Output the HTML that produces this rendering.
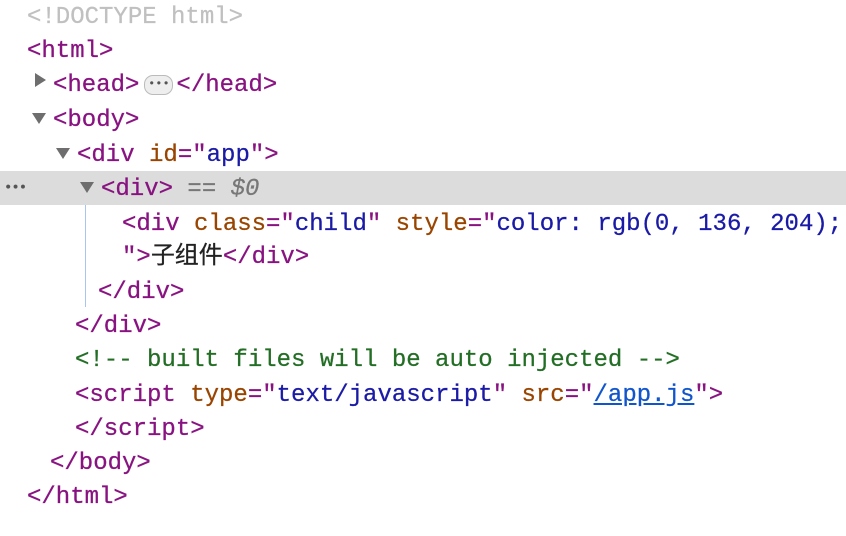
<!DOCTYPE html>
<html><head><style>
body{margin:0;width:846px;height:534px;background:#fff;overflow:hidden;position:relative;font-family:"Liberation Mono","Noto Sans CJK SC",monospace;font-size:24px;}
#w{position:absolute;left:0;top:2px;width:846px;height:534px;}
.l{position:absolute;height:34px;line-height:34px;white-space:pre;-webkit-text-stroke:0.25px currentColor;}
.t{color:#881280}.a{color:#994500}.v{color:#1a1aa6}.c{color:#236e25}.d{color:#c0c0c0}.g{color:#222}
.tri{position:absolute;width:0;height:0;}
.r{border-top:7px solid transparent;border-bottom:7px solid transparent;border-left:11px solid #6e6e6e;}
.dn{border-left:7px solid transparent;border-right:7px solid transparent;border-top:11px solid #6e6e6e;}
</style></head><body>
<div style="position:absolute;left:0;top:171px;width:846px;height:34px;background:#dcdcdc"></div>
<div style="position:absolute;left:85px;top:205px;width:1px;height:102px;background:#a8c4f0"></div>
<div id="w">
<div class="l d" style="left:27px;top:-1px">&lt;!DOCTYPE html&gt;</div>
<div class="l t" style="left:27px;top:33px">&lt;html&gt;</div>
<div class="tri r" style="left:35px;top:71px"></div>
<div class="l t" style="left:53px;top:67px">&lt;head&gt;<span style="display:inline-block;width:27px;height:18px;border-radius:9px;background:#eee;border:1px solid #bbb;vertical-align:middle;margin:0 3px 0 5px;font-size:12px;line-height:16px;text-align:center;color:#555;-webkit-text-stroke:0">•••</span>&lt;/head&gt;</div>
<div class="tri dn" style="left:32px;top:111px"></div>
<div class="l t" style="left:53px;top:102px">&lt;body&gt;</div>
<div class="tri dn" style="left:56px;top:146px"></div>
<div class="l" style="left:77px;top:137px"><span class="t">&lt;div </span><span class="a">id</span><span class="t">="</span><span class="v">app</span><span class="t">"&gt;</span></div>
<div class="l" style="left:4px;top:169px;font-size:14px;color:#555;letter-spacing:-1px">•••</div>
<div class="tri dn" style="left:80px;top:180px"></div>
<div class="l" style="left:101px;top:171px"><span class="t">&lt;div&gt;</span><span style="color:#777"> == <i>$0</i></span></div>
<div class="l" style="left:122px;top:206px"><span class="t">&lt;div </span><span class="a">class</span><span class="t">="</span><span class="v">child</span><span class="t">" </span><span class="a">style</span><span class="t">="</span><span class="v">color: rgb(0, 136, 204);</span></div>
<div class="l" style="left:122px;top:239px"><span class="t">"&gt;</span><span class="g">子组件</span><span class="t">&lt;/div&gt;</span></div>
<div class="l t" style="left:98px;top:274px">&lt;/div&gt;</div>
<div class="l t" style="left:75px;top:308px">&lt;/div&gt;</div>
<div class="l c" style="left:75px;top:342px">&lt;!-- built files will be auto injected --&gt;</div>
<div class="l" style="left:75px;top:377px"><span class="t">&lt;script </span><span class="a">type</span><span class="t">="</span><span class="v">text/javascript</span><span class="t">" </span><span class="a">src</span><span class="t">="</span><span style="color:#1155cc;text-decoration:underline">/app.js</span><span class="t">"&gt;</span></div>
<div class="l t" style="left:75px;top:411px">&lt;/script&gt;</div>
<div class="l t" style="left:50px;top:445px">&lt;/body&gt;</div>
<div class="l t" style="left:27px;top:479px">&lt;/html&gt;</div>
</div>
</body></html>
